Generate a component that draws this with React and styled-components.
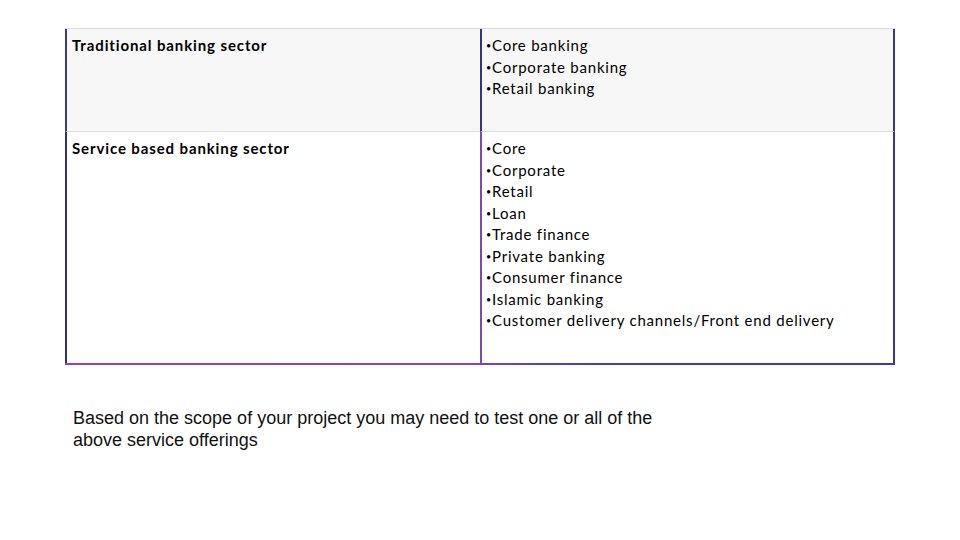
import styled, { createGlobalStyle } from "styled-components";

const GlobalStyle = createGlobalStyle`
  html, body {
    margin: 0;
    padding: 0;
    background: #ffffff;
  }
`;

const Page = styled.div`
  width: 960px;
  height: 540px;
  box-sizing: border-box;
  padding: 28px 0 0 65px;
  background: #ffffff;
`;

const Table = styled.div`
  width: 830px;
  display: grid;
  grid-template-columns: 415px 415px;
  grid-template-rows: 103px 231px 2px;
  border-top: 1px solid #dcdcdc;
  font-family: Lato, "Open Sans", sans-serif;
  font-size: 15px;
  line-height: 21.5px;
  color: #000;
`;

const Cell = styled.div`
  box-sizing: border-box;
  padding: ${(p) => (p.$right ? "6px 6px 0 4px" : "6px 6px 0 5px")};
  background: ${(p) => (p.$shaded ? "#f7f7f7" : "#ffffff")};
  border-left: 2px solid ${(p) => p.$lineColor};
  border-right: ${(p) => (p.$right ? "2px solid #36368a" : "none")};
  border-bottom: ${(p) => (p.$shaded ? "1px solid #dadada" : "none")};
`;

const Label = styled.div`
  font-weight: 700;
  letter-spacing: 0.88px;
`;

const Item = styled.div`
  white-space: nowrap;
  letter-spacing: 0.78px;
`;

const Bullet = styled.span`
  display: inline-block;
  width: 6px;
  font-size: 9px;
  vertical-align: 2px;
  letter-spacing: 0;
`;

const BottomRule = styled.div`
  grid-column: 1 / 3;
  background: linear-gradient(
    to right,
    #8a44c8 0%,
    #8444c8 48%,
    #5a40c4 56%,
    #3c3cc0 70%,
    #3a3ab8 100%
  );
`;

const Note = styled.p`
  margin: 42px 0 0 8px;
  font-family: "Liberation Sans", Arial, sans-serif;
  font-size: 18px;
  line-height: 22px;
  color: #111;
`;

const rows = [
  {
    label: "Traditional banking sector",
    items: ["Core banking", "Corporate banking", "Retail banking"],
    shaded: true,
    left: "#3a3a84",
    mid: "#34347e",
  },
  {
    label: "Service based banking sector",
    items: [
      "Core",
      "Corporate",
      "Retail",
      "Loan",
      "Trade finance",
      "Private banking",
      "Consumer finance",
      "Islamic banking",
      "Customer delivery channels/Front end delivery",
    ],
    shaded: false,
    left: "#2f2f82",
    mid: "#7a48b8",
  },
];

const App = () => {
  return (
    <>
      <GlobalStyle />
      <Page>
        <Table>
          {rows.map((row) => (
            <>
              <Cell key={row.label + "l"} $shaded={row.shaded} $lineColor={row.left}>
                <Label>{row.label}</Label>
              </Cell>
              <Cell key={row.label + "r"} $shaded={row.shaded} $lineColor={row.mid} $right>
                {row.items.map((item) => (
                  <Item key={item}>
                    <Bullet>•</Bullet>
                    {item}
                  </Item>
                ))}
              </Cell>
            </>
          ))}
          <BottomRule />
        </Table>
        <Note>
          Based on the scope of your project you may need to test one or all of the
          <br />
          above service offerings
        </Note>
      </Page>
    </>
  );
};

export default App;
